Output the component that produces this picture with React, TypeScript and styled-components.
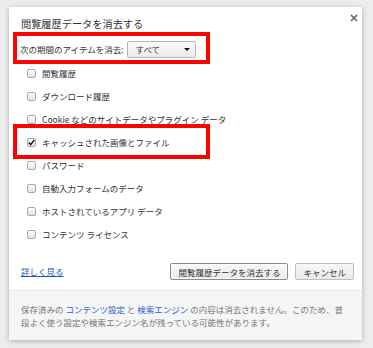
import React from "react";
import styled, { createGlobalStyle, css } from "styled-components";

const Global = createGlobalStyle`
  html, body { margin: 0; padding: 0; }
  body {
    background: #ededed;
    font-family: "Noto Sans CJK JP", "Noto Sans", sans-serif;
    width: 373px;
    height: 348px;
    overflow: hidden;
  }
`;

const Dialog = styled.div`
  margin: 7px 0 0 9px;
  width: 353px;
  height: 333px;
  background: #fff;
  box-shadow: 0 1px 5px rgba(0, 0, 0, 0.28);
  display: flex;
  flex-direction: column;
  box-sizing: border-box;
`;

const Header = styled.div`
  display: flex;
  justify-content: space-between;
  padding: 10px 4px 0 12px;
`;

const Title = styled.div`
  font-size: 10.2px;
  line-height: 13px;
  color: #333;
`;

const Close = styled.button`
  border: 0;
  background: none;
  padding: 0;
  margin-top: -3px;
  width: 8px;
  height: 8px;
  display: flex;
  cursor: pointer;
`;

const Body = styled.div`
  padding: 0 10px 0 12px;
  display: flex;
  flex-direction: column;
  font-size: 8.5px;
  color: #333;
`;

const highlight = css<{ $hl?: boolean; $top: number; $bottom: number; $left: number }>`
  ${(p) =>
    p.$hl &&
    css`
      &::after {
        content: "";
        position: absolute;
        top: ${p.$top}px;
        bottom: ${p.$bottom}px;
        left: ${p.$left}px;
        width: 197px;
        box-sizing: border-box;
        border: 4px solid #f00;
        pointer-events: none;
      }
    `}
`;

const PeriodRow = styled.div<{ $hl?: boolean; $top: number; $bottom: number; $left: number }>`
  position: relative;
  margin: 10px 0 0 -1px;
  height: 18px;
  display: flex;
  align-items: center;
  gap: 3px;
  line-height: 13px;
  ${highlight}
`;

const Select = styled.div`
  width: 69px;
  height: 17px;
  box-sizing: border-box;
  border: 1px solid #b5b5b5;
  border-radius: 2px;
  background: linear-gradient(#fafafa, #ececec);
  display: flex;
  align-items: center;
  justify-content: space-between;
  padding: 0 5px 0 8px;
  color: #333;
`;

const Arrow = styled.span`
  width: 0;
  height: 0;
  border-left: 3px solid transparent;
  border-right: 3px solid transparent;
  border-top: 3px solid #111;
`;

const List = styled.div`
  margin-top: 4px;
  display: flex;
  flex-direction: column;
`;

const Item = styled.label<{ $hl?: boolean; $top: number; $bottom: number; $left: number }>`
  position: relative;
  height: 23px;
  display: flex;
  align-items: center;
  padding-left: 6px;
  line-height: 13px;
  white-space: nowrap;
  ${highlight}
`;

const Box = styled.span`
  width: 9px;
  height: 9px;
  box-sizing: border-box;
  border: 1px solid #a9a9a9;
  border-radius: 2px;
  background: linear-gradient(#fdfdfd, #e4e4e4);
  margin-right: 6px;
  display: flex;
  align-items: center;
  justify-content: center;
  flex: none;
`;

const Actions = styled.div`
  margin-top: 17px;
  margin-right: -2px;
  height: 17px;
  display: flex;
  align-items: center;
  gap: 7px;
`;

const More = styled.a`
  color: #1a56c4;
  text-decoration: underline;
  margin-right: auto;
  line-height: 13px;
`;

const Button = styled.button<{ $primary?: boolean }>`
  height: 17px;
  padding: 0 7px;
  font-family: inherit;
  font-size: 8.5px;
  color: #333;
  border-radius: 2px;
  border: 1px solid ${(p) => (p.$primary ? "#8a8a8a" : "#c0c0c0")};
  background: linear-gradient(#f8f8f8, #e9e9e9);
  box-shadow: ${(p) => (p.$primary ? "inset 0 0 0 1px rgba(255,255,255,0.6)" : "none")};
  display: flex;
  align-items: center;
`;

const Footer = styled.div`
  margin-top: auto;
  height: 50px;
  box-sizing: border-box;
  background: #f5f5f5;
  border-top: 1px solid #e6e6e6;
  padding: 12px 11px 0 12px;
  font-size: 8.5px;
  line-height: 13px;
  color: #777;
`;

const FLink = styled.span`
  color: #2d62c8;
`;

const Check = () => (
  <svg width="7" height="7" viewBox="0 0 7 7">
    <path d="M0.8 3.6 L2.7 5.6 L6.3 0.9" fill="none" stroke="#111" strokeWidth="1.5" />
  </svg>
);

const items: { label: string; checked?: boolean }[] = [
  { label: "閲覧履歴" },
  { label: "ダウンロード履歴" },
  { label: "Cookie などのサイトデータやプラグイン データ" },
  { label: "キャッシュされた画像とファイル", checked: true },
  { label: "パスワード" },
  { label: "自動入力フォームのデータ" },
  { label: "ホストされているアプリ データ" },
  { label: "コンテンツ ライセンス" },
];

export default function App() {
  return (
    <>
      <Global />
      <Dialog>
        <Header>
          <Title>閲覧履歴データを消去する</Title>
          <Close aria-label="close">
            <svg width="8" height="8" viewBox="0 0 8 8">
              <path d="M1 1 L7 7 M7 1 L1 7" stroke="#666" strokeWidth="1.6" />
            </svg>
          </Close>
        </Header>
        <Body>
          <PeriodRow $hl $top={-8} $bottom={-6} $left={-7}>
            <span>次の期間のアイテムを消去:</span>
            <Select>
              <span>すべて</span>
              <Arrow />
            </Select>
          </PeriodRow>
          <List>
            {items.map((it) => (
              <Item key={it.label} $hl={it.checked} $top={-7} $bottom={-5} $left={-8}>
                <Box>{it.checked && <Check />}</Box>
                {it.label}
              </Item>
            ))}
          </List>
          <Actions>
            <More href="#">詳しく見る</More>
            <Button $primary>閲覧履歴データを消去する</Button>
            <Button>キャンセル</Button>
          </Actions>
        </Body>
        <Footer>
          保存済みの <FLink>コンテンツ設定</FLink> と <FLink>検索エンジン</FLink>{" "}
          の内容は消去されません。このため、普段よく使う設定や検索エンジン名が残っている可能性があります。
        </Footer>
      </Dialog>
    </>
  );
}
